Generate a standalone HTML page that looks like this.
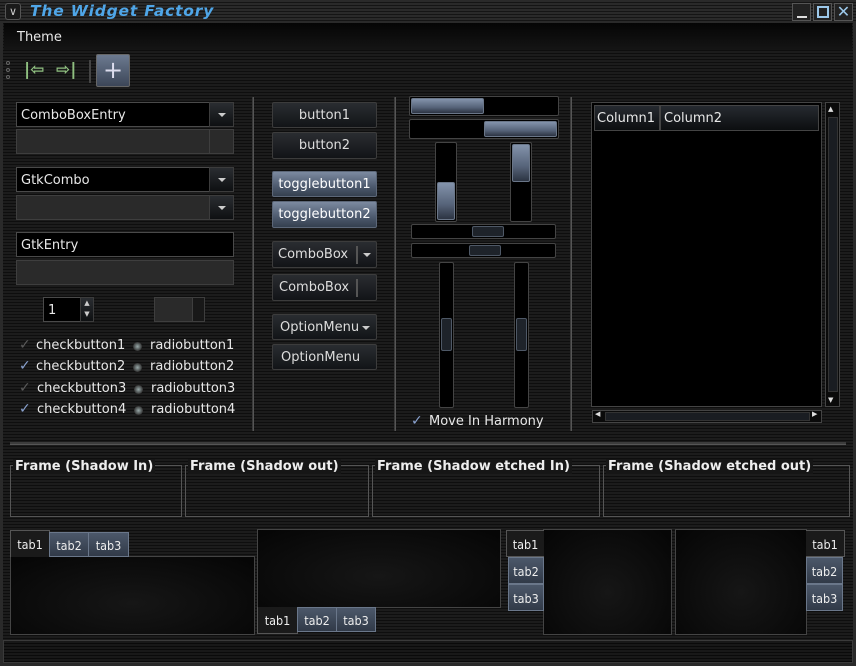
<!DOCTYPE html>
<html><head><style>
*{margin:0;padding:0;box-sizing:border-box}
body{width:856px;height:666px;overflow:hidden;background:#141414;font-family:"DejaVu Sans","Liberation Sans",sans-serif;font-size:13px;color:#e8e8e8;position:relative}
.bg{position:absolute;left:0;top:0;width:856px;height:666px;background:repeating-linear-gradient(to bottom,#1c1c1c 0,#1c1c1c 2px,#0e0e0e 2px,#0e0e0e 3px)}
.a{position:absolute}
.ent{position:absolute;background:#000;border:1px solid #4a4a4a;padding-left:4px;line-height:25px}
.grey{position:absolute;background:#2a2a2a;border:1px solid #3e3e3e}
.btn{position:absolute;border:1px solid #3c3c3c;border-radius:2px;background:linear-gradient(#2a2d31,#121417);text-align:center;line-height:26px;color:#ddd}
.tog{background:linear-gradient(#7c8aa0,#4d5a6e 60%,#35404f);border-color:#5c6778;color:#fff}
.arrbtn{position:absolute;background:linear-gradient(#2a2d31,#0e1012);border:1px solid #3c3c3c}
.tri{position:absolute;width:0;height:0;border-left:4px solid transparent;border-right:4px solid transparent;border-top:4px solid #ccc}
.vs{position:absolute;width:2px;background:#3a3a3a;border-right:1px solid #555}
.trough{position:absolute;background:#000;border:1px solid #444;border-radius:2px}
.fill{position:absolute;background:linear-gradient(#8393ab,#566379 60%,#2c3442);border:1px solid #6a7688;border-radius:2px}
.th{position:absolute;background:#1e232a;border:1px solid #4e5866;border-radius:2px}
.frame{position:absolute;border:1px solid #555}
.fl{position:absolute;font-weight:bold;font-size:13px;background:#161616;padding:0 2px;top:-7px;color:#eee}
.panel{position:absolute;background:radial-gradient(ellipse at 50% 60%,#161616,#050505);border:1px solid #444}
.tab{position:absolute;font-size:12.5px;text-align:center;color:#eee;border:1px solid #555;font-family:"DejaVu Sans Condensed","DejaVu Sans",sans-serif}
.ta{background:#1a1a1a}
.ti{background:linear-gradient(#4c586a,#313a48);border-color:#6a778a}
.ck{position:absolute;font-size:14px;color:#5a5a5a}
.ck.on{color:#8aa2cf}
.rd{position:absolute;width:9px;height:9px;border-radius:50%;background:radial-gradient(#9aa,#333 70%)}
</style></head><body>
<div class="bg"></div>
<div class="a" style="left:0;top:0;width:856px;height:23px;background:repeating-linear-gradient(to bottom,#2a2a2a 0,#2a2a2a 2px,#151515 2px,#151515 3px)"></div>
<div class="a" style="left:5px;top:3px;width:16px;height:17px;border:1px solid #555;border-radius:3px;background:#1a1a1a;color:#ccc;font-size:11px;text-align:center;line-height:15px">∨</div>
<div class="a" style="left:30px;top:2px;font-style:italic;font-weight:bold;font-size:15.5px;color:#4fa6e8;font-family:'DejaVu Sans',sans-serif;letter-spacing:0.8px">The Widget Factory</div>
<div class="a" style="left:792px;top:3px;width:19px;height:18px;border:1px solid #555;background:#222"><div class="a" style="left:4px;top:12px;width:10px;height:2px;background:#ddd"></div></div>
<div class="a" style="left:813px;top:3px;width:19px;height:18px;border:1px solid #555;background:#222"><div class="a" style="left:3px;top:2px;width:12px;height:12px;border:2px solid #9cc8ea"></div></div>
<div class="a" style="left:834px;top:3px;width:19px;height:18px;border:1px solid #555;background:#222;color:#9cc8ea;font-size:16px;line-height:16px;text-align:center">✕</div>
<div class="a" style="left:0;top:23px;width:856px;height:642px;border-left:3px solid #2a2a2a;border-right:3px solid #2a2a2a"></div>
<div class="a" style="left:4px;top:23px;width:848px;height:27px;background:linear-gradient(#050505,#151515)"></div>
<div class="a" style="left:17px;top:30px">Theme</div>
<div class="a" style="left:6px;top:61px;width:4px;height:4px;border:1px solid #666;border-radius:50%"></div>
<div class="a" style="left:6px;top:68px;width:4px;height:4px;border:1px solid #666;border-radius:50%"></div>
<div class="a" style="left:6px;top:75px;width:4px;height:4px;border:1px solid #666;border-radius:50%"></div>
<div class="a" style="left:24px;top:60px;color:#8fbf80;font-size:17px;font-weight:bold">|⇦</div>
<div class="a" style="left:56px;top:60px;color:#8fbf80;font-size:17px;font-weight:bold">⇨|</div>
<div class="a" style="left:89px;top:60px;width:2px;height:23px;background:#444"></div>
<div class="a" style="left:96px;top:54px;width:34px;height:33px;border:1px solid #666;border-radius:2px;background:linear-gradient(#6c7a90,#3c4658);color:#dde;font-size:24px;line-height:30px;text-align:center">+</div>
<div class="ent" style="left:16px;top:102px;width:194px;height:25px">ComboBoxEntry</div>
<div class="arrbtn" style="left:209px;top:102px;width:25px;height:25px"><div class="tri" style="left:8px;top:10px"></div></div>
<div class="grey" style="left:16px;top:129px;width:194px;height:25px"></div>
<div class="grey" style="left:209px;top:129px;width:25px;height:25px"></div>
<div class="ent" style="left:16px;top:167px;width:194px;height:25px">GtkCombo</div>
<div class="arrbtn" style="left:209px;top:167px;width:25px;height:25px"><div class="tri" style="left:8px;top:10px"></div></div>
<div class="grey" style="left:16px;top:195px;width:194px;height:25px"></div>
<div class="arrbtn" style="left:209px;top:195px;width:25px;height:25px"><div class="tri" style="left:8px;top:10px"></div></div>
<div class="ent" style="left:16px;top:232px;width:218px;height:25px">GtkEntry</div>
<div class="grey" style="left:16px;top:260px;width:218px;height:25px"></div>
<div class="ent" style="left:43px;top:297px;width:38px;height:25px">1</div>
<div class="arrbtn" style="left:80px;top:297px;width:14px;height:25px;color:#ccc;font-size:7px;text-align:center;line-height:11px">▲<br>▼</div>
<div class="grey" style="left:154px;top:297px;width:39px;height:25px"></div>
<div class="grey" style="left:192px;top:297px;width:13px;height:25px;background:#181818"></div>
<div class="ck" style="left:19px;top:337px">✓</div><div class="a" style="left:36px;top:338px">checkbutton1</div>
<div class="ck on" style="left:19px;top:358px">✓</div><div class="a" style="left:36px;top:359px">checkbutton2</div>
<div class="ck" style="left:19px;top:380px">✓</div><div class="a" style="left:37px;top:381px">checkbutton3</div>
<div class="ck on" style="left:19px;top:401px">✓</div><div class="a" style="left:37px;top:402px">checkbutton4</div>
<div class="rd" style="left:133px;top:342px"></div><div class="a" style="left:150px;top:338px">radiobutton1</div>
<div class="rd" style="left:133px;top:363px"></div><div class="a" style="left:150px;top:359px">radiobutton2</div>
<div class="rd" style="left:134px;top:385px"></div><div class="a" style="left:151px;top:381px">radiobutton3</div>
<div class="rd" style="left:134px;top:406px"></div><div class="a" style="left:151px;top:402px">radiobutton4</div>
<div class="vs" style="left:252px;top:97px;height:334px"></div>
<div class="vs" style="left:394px;top:97px;height:334px"></div>
<div class="vs" style="left:570px;top:97px;height:334px"></div>
<div class="btn" style="left:272px;top:102px;width:105px;height:26px">button1</div>
<div class="btn" style="left:272px;top:132px;width:105px;height:27px">button2</div>
<div class="btn tog" style="left:272px;top:171px;width:105px;height:26px">togglebutton1</div>
<div class="btn tog" style="left:272px;top:201px;width:105px;height:27px">togglebutton2</div>
<div class="btn" style="left:272px;top:241px;width:105px;height:27px;text-align:left;padding-left:5px">ComboBox<div class="a" style="left:83px;top:4px;width:2px;height:18px;background:#555"></div><div class="tri" style="left:90px;top:11px"></div></div>
<div class="btn" style="left:272px;top:274px;width:105px;height:27px;text-align:left;padding-left:6px">ComboBox<div class="a" style="left:83px;top:4px;width:2px;height:18px;background:#555"></div></div>
<div class="btn" style="left:272px;top:314px;width:105px;height:26px;text-align:left;padding-left:7px">OptionMenu<div class="tri" style="left:89px;top:11px"></div></div>
<div class="btn" style="left:272px;top:344px;width:105px;height:26px;text-align:left;padding-left:8px">OptionMenu</div>
<div class="trough" style="left:409px;top:96px;width:150px;height:20px"><div class="fill" style="left:1px;top:1px;width:73px;height:16px"></div></div>
<div class="trough" style="left:409px;top:119px;width:150px;height:20px"><div class="fill" style="left:74px;top:1px;width:73px;height:16px"></div></div>
<div class="trough" style="left:435px;top:142px;width:22px;height:80px"><div class="fill" style="left:1px;top:39px;width:18px;height:38px"></div></div>
<div class="trough" style="left:510px;top:142px;width:22px;height:80px"><div class="fill" style="left:1px;top:1px;width:18px;height:38px"></div></div>
<div class="trough" style="left:411px;top:224px;width:145px;height:15px"><div class="th" style="left:60px;top:1px;width:32px;height:11px"></div></div>
<div class="trough" style="left:411px;top:243px;width:145px;height:15px"><div class="th" style="left:57px;top:1px;width:32px;height:11px"></div></div>
<div class="trough" style="left:439px;top:262px;width:15px;height:146px"><div class="th" style="left:1px;top:55px;width:11px;height:33px"></div></div>
<div class="trough" style="left:514px;top:262px;width:15px;height:146px"><div class="th" style="left:1px;top:55px;width:11px;height:33px"></div></div>
<div class="ck on" style="left:411px;top:413px">✓</div><div class="a" style="left:429px;top:414px">Move In Harmony</div>
<div class="a" style="left:591px;top:102px;width:231px;height:305px;background:#000;border:1px solid #444"></div>
<div class="a" style="left:594px;top:105px;width:66px;height:26px;border:1px solid #444;background:linear-gradient(#262a30,#0c0e10);line-height:25px;padding-left:2px">Column1</div>
<div class="a" style="left:660px;top:105px;width:159px;height:26px;border:1px solid #444;background:linear-gradient(#262a30,#0c0e10);line-height:25px;padding-left:3px">Column2</div>
<div class="a" style="left:825px;top:102px;width:15px;height:305px;border:1px solid #444;background:#0a0a0a"></div>
<div class="a" style="left:828px;top:117px;width:10px;height:275px;background:#1a1d22;border:1px solid #333"></div>
<div class="a" style="left:828px;top:105px;color:#ddd;font-size:7px">▲</div>
<div class="a" style="left:828px;top:396px;color:#ddd;font-size:7px">▼</div>
<div class="a" style="left:592px;top:410px;width:230px;height:13px;border:1px solid #444;background:#0a0a0a"></div>
<div class="a" style="left:605px;top:412px;width:205px;height:9px;background:#1a1d22;border:1px solid #333"></div>
<div class="a" style="left:595px;top:410px;color:#ddd;font-size:7px">◀</div>
<div class="a" style="left:812px;top:410px;color:#ddd;font-size:7px">▶</div>
<div class="a" style="left:10px;top:442px;width:836px;height:3px;background:#3c3c3c;border-bottom:1px solid #555"></div>
<div class="frame" style="left:10px;top:465px;width:172px;height:52px"><span class="fl" style="left:2px">Frame (Shadow In)</span></div>
<div class="frame" style="left:185px;top:465px;width:184px;height:52px"><span class="fl" style="left:2px">Frame (Shadow out)</span></div>
<div class="frame" style="left:372px;top:465px;width:228px;height:52px"><span class="fl" style="left:2px">Frame (Shadow etched In)</span></div>
<div class="frame" style="left:603px;top:465px;width:247px;height:52px"><span class="fl" style="left:2px">Frame (Shadow etched out)</span></div>
<div class="panel" style="left:10px;top:556px;width:245px;height:79px"></div>
<div class="tab ta" style="left:10px;top:530px;width:40px;height:27px;line-height:27px;border-bottom:none">tab1</div>
<div class="tab ti" style="left:49px;top:532px;width:40px;height:25px;line-height:25px">tab2</div>
<div class="tab ti" style="left:88px;top:532px;width:41px;height:25px;line-height:25px">tab3</div>
<div class="panel" style="left:257px;top:529px;width:244px;height:79px"></div>
<div class="tab ta" style="left:257px;top:607px;width:41px;height:27px;line-height:27px;border-top:none">tab1</div>
<div class="tab ti" style="left:297px;top:607px;width:40px;height:25px;line-height:25px">tab2</div>
<div class="tab ti" style="left:336px;top:607px;width:40px;height:25px;line-height:25px">tab3</div>
<div class="panel" style="left:543px;top:529px;width:129px;height:106px"></div>
<div class="tab ta" style="left:506px;top:530px;width:38px;height:27px;line-height:27px;border-right:none">tab1</div>
<div class="tab ti" style="left:508px;top:557px;width:36px;height:27px;line-height:27px">tab2</div>
<div class="tab ti" style="left:508px;top:584px;width:36px;height:27px;line-height:27px">tab3</div>
<div class="panel" style="left:675px;top:529px;width:132px;height:106px"></div>
<div class="tab ta" style="left:806px;top:530px;width:39px;height:27px;line-height:27px;border-left:none">tab1</div>
<div class="tab ti" style="left:806px;top:557px;width:37px;height:27px;line-height:27px">tab2</div>
<div class="tab ti" style="left:806px;top:584px;width:37px;height:27px;line-height:27px">tab3</div>
<div class="a" style="left:3px;top:640px;width:850px;height:23px;border:1px solid #3a3a3a;background:repeating-linear-gradient(to bottom,#181818 0,#181818 2px,#0a0a0a 2px,#0a0a0a 3px)"></div>
<div class="a" style="left:0;top:663px;width:856px;height:3px;background:#2a2a2a"></div>
</body></html>
